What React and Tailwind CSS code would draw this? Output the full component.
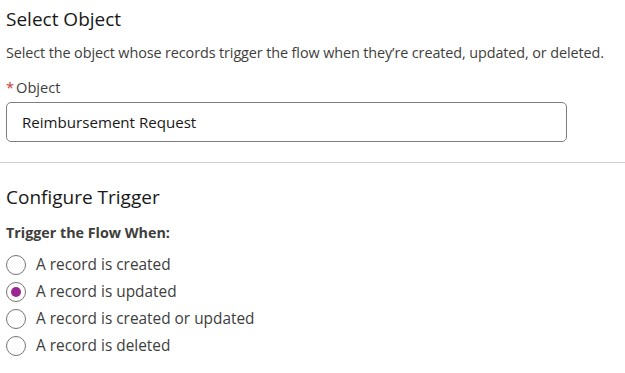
import React, { useState } from "react";

const options = [
  "A record is created",
  "A record is updated",
  "A record is created or updated",
  "A record is deleted",
];

function Radio({ checked }) {
  return (
    <span className="flex h-[20px] w-[20px] shrink-0 items-center justify-center rounded-full border border-[#747474] bg-white">
      {checked && <span className="h-[10px] w-[10px] rounded-full bg-[#9b2593]" />}
    </span>
  );
}

export default function App() {
  const [selected, setSelected] = useState(1);

  return (
    <div className="h-[373px] w-[625px] bg-white text-[#3e3e3c] font-['Open_Sans',sans-serif]">
      {/* Select Object */}
      <div className="px-[6px] pt-[5px]">
        <h2 className="text-[19px] leading-[28px] text-[#181818]">Select Object</h2>
        <p className="mt-[10px] whitespace-nowrap text-[14.4px] leading-[20px] tracking-[-0.1px]">
          Select the object whose records trigger the flow when they’re created, updated, or deleted.
        </p>
        <label className="mt-[14px] flex items-center text-[14.6px] leading-[20px]">
          <span className="mr-[2px] text-[#c23934]">*</span>Object
        </label>
        <div className="mt-[5px] flex h-[40px] w-[561px] items-center rounded-[5px] border border-[#7d7d7d] px-[15px] text-[15.1px] text-[#181818]">
          Reimbursement Request
        </div>
      </div>

      <div className="mt-[20px] h-px w-full bg-[#cfcfcf]" />

      {/* Configure Trigger */}
      <div className="px-[6px] pt-[20px]">
        <h2 className="text-[19px] leading-[28px] text-[#181818]">Configure Trigger</h2>
        <p className="mt-[12px] text-[14.3px] font-bold leading-[20px] text-[#3e3e3c]">Trigger the Flow When:</p>
        <div className="mt-[8px] flex flex-col">
          {options.map((o, i) => (
            <button
              key={o}
              onClick={() => setSelected(i)}
              className="flex h-[27px] items-center gap-[10px] text-left text-[15.4px]"
            >
              <Radio checked={selected === i} />
              <span>{o}</span>
            </button>
          ))}
        </div>
      </div>
    </div>
  );
}
